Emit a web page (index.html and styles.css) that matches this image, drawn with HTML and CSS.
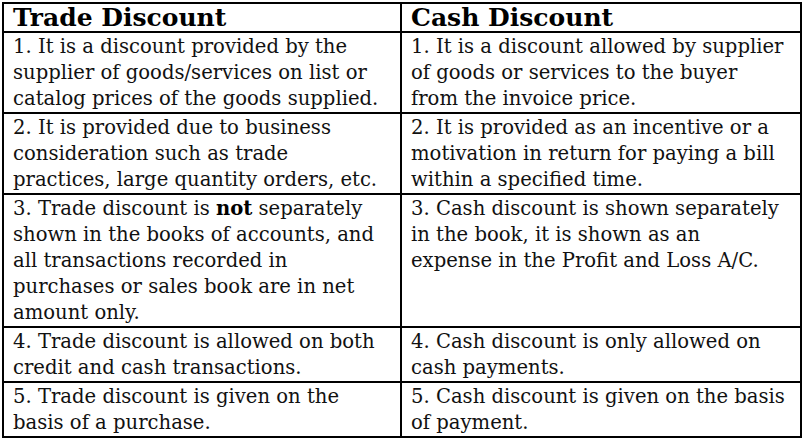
FILE: index.html
```html
<!DOCTYPE html>
<html lang="en">
<head>
<meta charset="utf-8">
<title>Trade Discount vs Cash Discount</title>
<link rel="stylesheet" href="styles.css">
</head>
<body>
<table class="compare">
  <thead>
    <tr>
      <th class="col-left">Trade Discount</th>
      <th class="col-right">Cash Discount</th>
    </tr>
  </thead>
  <tbody>
    <tr>
      <td>1. It is a discount provided by the<br>supplier of goods/services on list or<br>catalog prices of the goods supplied.</td>
      <td>1. It is a discount allowed by supplier<br>of goods or services to the buyer<br>from the invoice price.</td>
    </tr>
    <tr>
      <td>2. It is provided due to business<br>consideration such as trade<br>practices, large quantity orders, etc.</td>
      <td>2. It is provided as an incentive or a<br>motivation in return for paying a bill<br>within a specified time.</td>
    </tr>
    <tr>
      <td>3. Trade discount is <strong>not</strong> separately<br>shown in the books of accounts, and<br>all transactions recorded in<br>purchases or sales book are in net<br>amount only.</td>
      <td>3. Cash discount is shown separately<br>in the book, it is shown as an<br>expense in the Profit and Loss A/C.</td>
    </tr>
    <tr>
      <td>4. Trade discount is allowed on both<br>credit and cash transactions.</td>
      <td>4. Cash discount is only allowed on<br>cash payments.</td>
    </tr>
    <tr>
      <td>5. Trade discount is given on the<br>basis of a purchase.</td>
      <td>5. Cash discount is given on the basis<br>of payment.</td>
    </tr>
  </tbody>
</table>
</body>
</html>
```
FILE: styles.css
```css
html, body {
  margin: 0;
  padding: 0;
  background: #ffffff;
}

body {
  padding: 2px;
  font-family: "DejaVu Serif", "Liberation Serif", serif;
  color: #111111;
}

.compare {
  width: 800px;
  border-collapse: collapse;
  table-layout: fixed;
}

.compare th,
.compare td {
  border: 2px solid #000000;
  text-align: left;
  vertical-align: top;
  white-space: nowrap;
  overflow: hidden;
  padding: 1px 2px 0 9px;
}

.compare th {
  font-size: 25px;
  font-weight: bold;
  line-height: 27px;
  padding-top: 0;
  color: #000000;
}

.compare td {
  font-size: 19.6px;
  line-height: 26px;
}

.compare strong {
  font-weight: bold;
  color: #000000;
}

.col-left {
  width: 385px;
}
```
